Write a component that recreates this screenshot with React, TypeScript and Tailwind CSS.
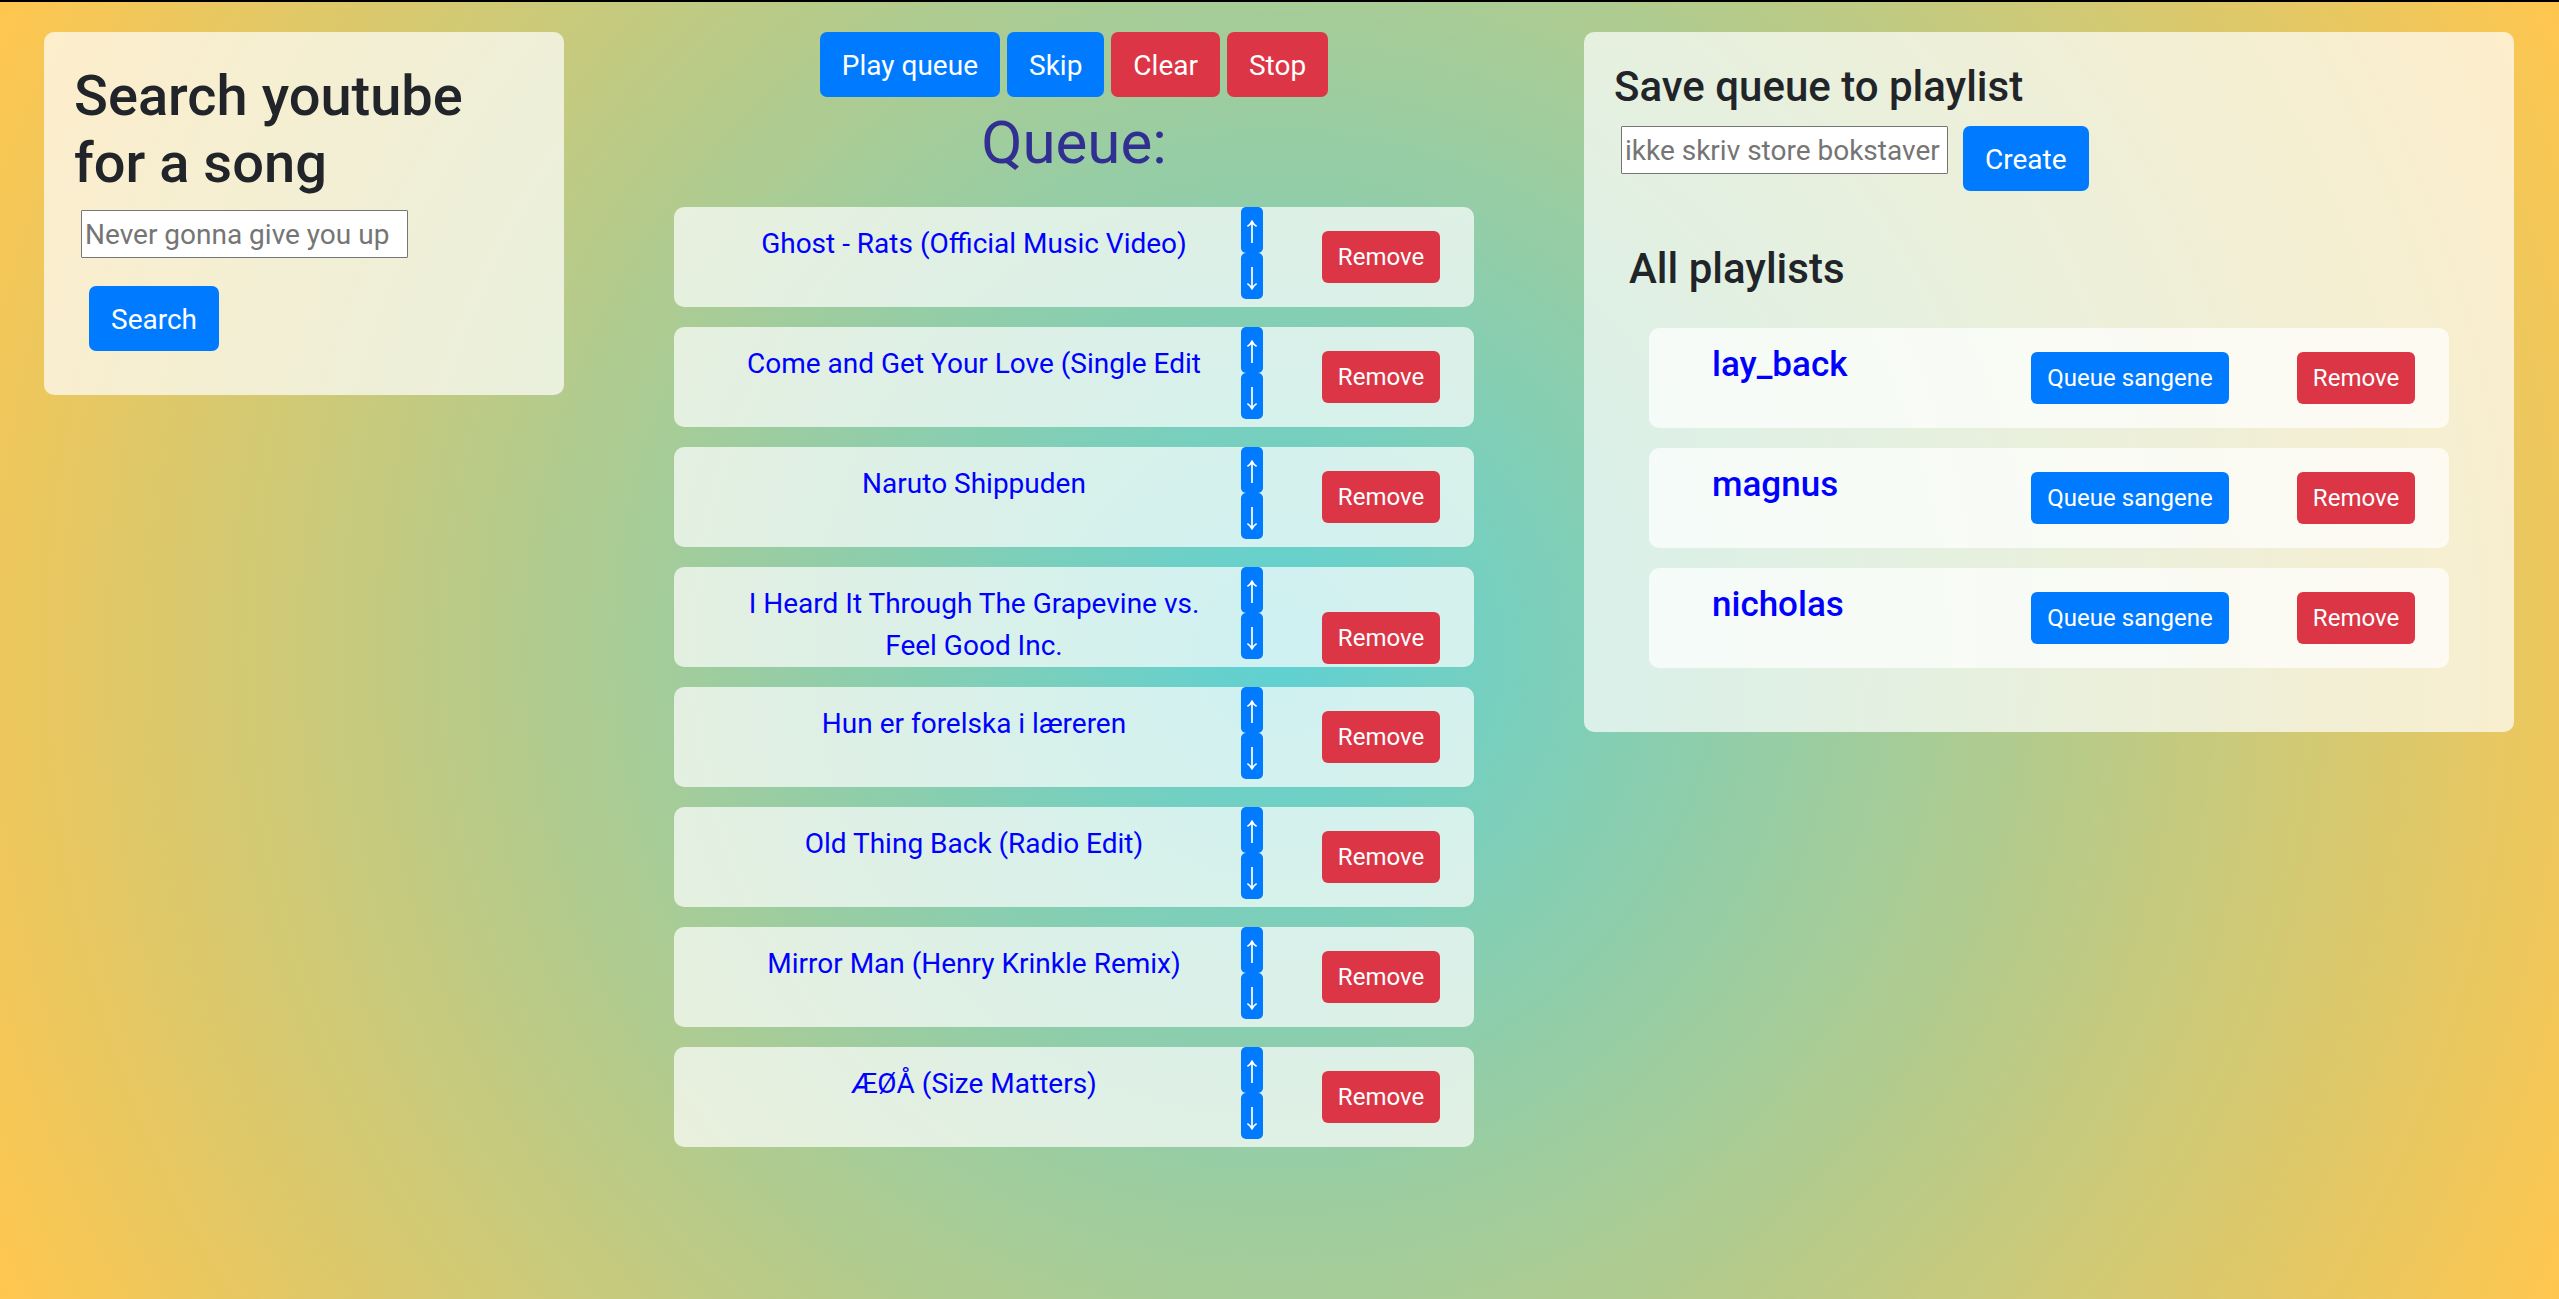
type Song = { title: string; wraps?: boolean };

const songs: Song[] = [
  { title: "Ghost - Rats (Official Music Video)" },
  { title: "Come and Get Your Love (Single Edit" },
  { title: "Naruto Shippuden" },
  { title: "I Heard It Through The Grapevine vs. Feel Good Inc.", wraps: true },
  { title: "Hun er forelska i læreren" },
  { title: "Old Thing Back (Radio Edit)" },
  { title: "Mirror Man (Henry Krinkle Remix)" },
  { title: "ÆØÅ (Size Matters)" },
];

const playlists = ["lay_back", "magnus", "nicholas"];

const button =
  "h-[65px] shrink-0 cursor-pointer rounded-[7px] px-[22px] pt-[2px] text-[28px] leading-[42px] whitespace-nowrap text-white";
const smallButton =
  "h-[52px] shrink-0 cursor-pointer rounded-[6px] text-center text-[24px] leading-[36px] whitespace-nowrap text-white";
const field =
  "h-[48px] w-[327px] min-w-0 rounded-[1px] border border-[#767676] bg-white px-[3px] text-[28px] text-black placeholder:text-[#757575] placeholder:opacity-100";
const row = "flex min-h-[100px] items-start rounded-[10px] bg-white/70";

function Arrow({ down = false }: { down?: boolean }) {
  return (
    <svg
      width="12"
      height="24"
      viewBox="0 0 12 24"
      fill="none"
      stroke="currentColor"
      strokeWidth="1.7"
      className={down ? "rotate-180" : ""}
      aria-hidden="true"
    >
      <path d="M6 1.6V23M1.4 6.4Q4.6 4.4 6 1.4Q7.4 4.4 10.6 6.4" />
    </svg>
  );
}

function MoveButton({ down = false, title }: { down?: boolean; title: string }) {
  return (
    <button
      type="button"
      aria-label={`Move ${title} ${down ? "down" : "up"}`}
      className="flex h-[46px] w-[22px] cursor-pointer items-center justify-center rounded-[5px] bg-[#007bff] pt-[4px] text-white"
    >
      <Arrow down={down} />
    </button>
  );
}

function SearchPanel() {
  return (
    <section className="rounded-[10px] bg-white/70 px-[30px] pt-[31px] pb-[44px]">
      <h2 className="mb-[13px] text-[56px] leading-[67px] font-medium">Search youtube for a song</h2>
      <form className="flex flex-col items-start gap-[28px]" onSubmit={(e) => e.preventDefault()}>
        <input
          type="text"
          aria-label="Search youtube for a song"
          placeholder="Never gonna give you up"
          className={`${field} ml-[7px]`}
        />
        <button type="submit" className={`${button} ml-[15px] bg-[#007bff]`}>
          Search
        </button>
      </form>
    </section>
  );
}

function QueuePanel() {
  return (
    <section>
      <div className="flex flex-wrap justify-center gap-[7px]">
        <button type="button" className={`${button} bg-[#007bff]`}>Play queue</button>
        <button type="button" className={`${button} bg-[#007bff]`}>Skip</button>
        <button type="button" className={`${button} bg-[#dc3545]`}>Clear</button>
        <button type="button" className={`${button} bg-[#dc3545]`}>Stop</button>
      </div>
      <h1 className="mb-[18px] text-center text-[60px] leading-[92px] font-normal text-[#312f91]">Queue:</h1>
      <ul className="flex flex-col gap-[20px]">
        {songs.map(({ title, wraps }) => (
          <li key={title} className={`${row} pr-[34px] pl-[50px]`}>
            <p className="min-w-0 flex-1 px-[20px] pt-[16px] text-center leading-[42px] text-[#0000ff]">{title}</p>
            <div className="mr-[59px] ml-[17px] flex flex-col">
              <MoveButton title={title} />
              <MoveButton title={title} down />
            </div>
            <button
              type="button"
              className={`${smallButton} w-[118px] bg-[#dc3545] ${wraps ? "mt-[45px]" : "mt-[24px]"}`}
            >
              Remove
            </button>
          </li>
        ))}
      </ul>
    </section>
  );
}

function PlaylistPanel() {
  return (
    <section className="rounded-[10px] bg-white/70 px-[30px] pt-[30px] pb-[64px]">
      <h4 className="mb-[14px] text-[42px] leading-[50px] font-medium">Save queue to playlist</h4>
      <form className="flex items-start gap-[15px] pl-[7px]" onSubmit={(e) => e.preventDefault()}>
        <input
          type="text"
          aria-label="Playlist name"
          placeholder="ikke skriv store bokstaver"
          className={field}
        />
        <button type="submit" className={`${button} bg-[#007bff]`}>Create</button>
      </form>
      <h4 className="mt-[53px] mb-[34px] pl-[15px] text-[42px] leading-[50px] font-medium">All playlists</h4>
      <ul className="mx-[35px] flex flex-col gap-[20px]">
        {playlists.map((name) => (
          <li key={name} className={`${row} pr-[34px] pl-[63px]`}>
            <h5 className="min-w-0 flex-1 pt-[16px] text-[35px] leading-[42px] font-medium text-[#0000ff]">{name}</h5>
            <button type="button" className={`${smallButton} mt-[24px] mr-[68px] w-[198px] bg-[#007bff]`}>
              Queue sangene
            </button>
            <button type="button" className={`${smallButton} mt-[24px] w-[118px] bg-[#dc3545]`}>
              Remove
            </button>
          </li>
        ))}
      </ul>
    </section>
  );
}

export default function App() {
  return (
    <main className="min-h-screen border-t-2 border-black bg-[radial-gradient(circle,#5ed1d3_0%,#ffc64e_100%)] pt-[30px] pr-[45px] pl-[44px] font-['Roboto',sans-serif] text-[28px] text-[#212529]">
      <div className="grid grid-cols-[520fr_800fr_930fr] items-start gap-[110px]">
        <SearchPanel />
        <QueuePanel />
        <PlaylistPanel />
      </div>
    </main>
  );
}
